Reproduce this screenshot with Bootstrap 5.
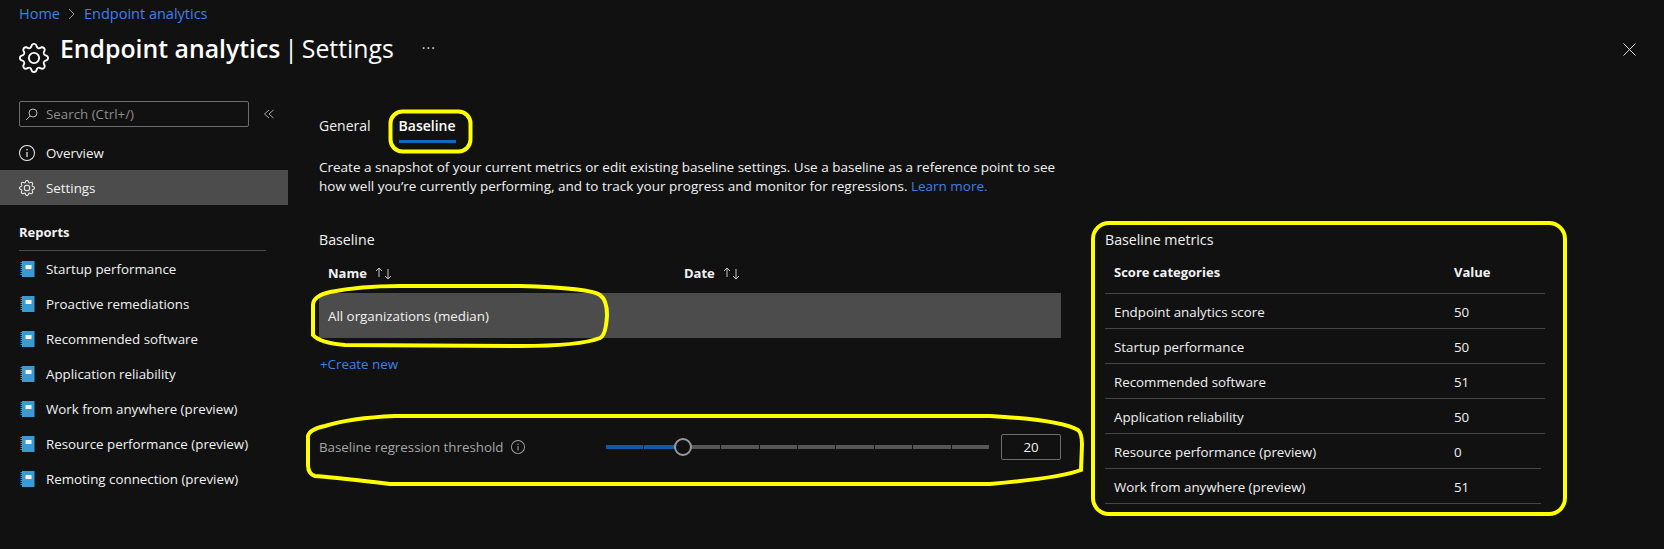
<!DOCTYPE html>
<html lang="en">
<head>
    <meta charset="UTF-8">
    <title>Endpoint analytics | Settings</title>
    <link href="https://cdn.jsdelivr.net/npm/bootstrap@5.3.3/dist/css/bootstrap.min.css" rel="stylesheet">
    <script src="https://cdn.jsdelivr.net/npm/bootstrap@5.3.3/dist/js/bootstrap.bundle.min.js"></script>
    <style>
        html, body { height: 549px; overflow: hidden; }
        body { background: #111112; color: #f2f2f2; font-family: "Open Sans", "Noto Sans", sans-serif; font-size: 13.33px; line-height: 19px; position: relative; }
        a { color: #3f80ea; text-decoration: none; }
        .crumbs { height: 26px; padding: 1px 0 0 19px; font-size: 14.5px; line-height: 20px; }
        .crumb-sep { width: 7px; height: 12px; margin: 0 8.5px; fill: none; stroke: #9a9a9a; }
        .page-head { height: 67px; padding: 7px 20px 0 19px; }
        .page-gear { width: 30px; height: 30px; margin-top: 10px; margin-right: 11px; fill: #fff; }
        .page-title { font-size: 24.8px; line-height: 30px; margin: 0; font-weight: 400; color: #fff; word-spacing: -2.5px; }
        .page-title b { font-weight: 600; word-spacing: 0; }
        .more-dots { margin: 5px 0 0 28px; font-size: 14px; letter-spacing: 1px; color: #ddd; line-height: 20px; }
        .side { width: 288px; padding-top: 8px; flex: none; }
        .search-row { padding-left: 19px; height: 26px; margin-bottom: 8px; }
        .search-box { width: 230px; height: 26px; border: 1px solid #6e6e6e; border-radius: 2px; padding-left: 5px; color: #8d8d8d; gap: 8px; }
        .collapse-mark { margin-left: 14px; width: 12px; height: 12px; fill: none; stroke: #aaa; stroke-width: 1; }
        .side-link { height: 35px; padding: 2px 0 0 19px; gap: 11px; color: #f2f2f2; }
        .side-link.picked { background: #4c4c4c; }
        .side-icon { width: 16px; height: 16px; flex: none; fill: #eee; margin-top: -2px; }
        .side-head { margin: 18px 22px 0 19px; padding-bottom: 6px; height: 28px; border-bottom: 1px solid #4a4a4a; font-weight: 700; font-size: 13px; }
        .book-icon { width: 16px; height: 16px; flex: none; margin-top: -2px; }
        .main-pane { padding-left: 31px; }
        .tab-strip { gap: 28px; height: 50px; padding-top: 19px; }
        .tab-item { padding: 0; height: 31px; color: #f2f2f2; line-height: 28px; font-size: 14px; }
        .tab-item.on { font-weight: 600; color: #fff; border-bottom: 3px solid #0f6cbd; }
        .intro { margin: 15px 0 0; width: 742px; font-size: 13.5px; }
        .col-left { width: 742px; }
        .col-right { width: 440px; margin-left: 44px; }
        .block-title { margin-top: 34px; height: 25px; font-size: 14.2px; }
        .grid-table { --bs-table-bg: transparent; --bs-table-color: #f2f2f2; --bs-table-border-color: #454545; margin: 0; table-layout: fixed; }
        .grid-table th, .grid-table td { padding: 0 9px; vertical-align: middle; }
        .grid-table td { height: 35px; padding-top: 4px; }
        .grid-table th { font-weight: 700; height: 38px; font-size: 13px; padding-bottom: 2px; }
        .sort-arrows { width: 18px; height: 14px; margin-left: 5px; fill: none; stroke: #c8c8c8; stroke-width: 1; vertical-align: -2px; }
        .base-table th:first-child { width: 356px; }
        .base-table th { border-bottom: 0; }
        .base-table td { height: 45px; background: #4c4c4c; border-bottom: 0; padding-top: 2px; }
        .add-link { display: block; margin: 17px 0 0 1px; }
        .thresh-row { margin-top: 60px; height: 26px; }
        .thresh-label { width: 287px; color: #a6a6a6; gap: 8px; }
        .info-icon { width: 14px; height: 14px; fill: #a6a6a6; }
        .track { width: 383px; height: 4px; gap: 1px; position: relative; margin-right: 12px; }
        .track span { flex: 1; background: #565656; }
        .track span.done { background: #0b5cad; }
        .thumb { position: absolute; left: 68px; top: -7px; width: 18px; height: 18px; border-radius: 50%; border: 2px solid #9a9a9a; background: #111112; }
        .value-box { width: 60px; height: 26px; border: 1px solid #6e6e6e; border-radius: 2px; }
        .metrics-table th:first-child { width: 340px; }
        /* the last two rules stop 4px short of the table edge */
        .metrics-table tbody tr:nth-child(n+5) td:last-child { position: relative; }
        .metrics-table tbody tr:nth-child(n+5) td:last-child::after { content: ""; position: absolute; right: 0; bottom: -1px; width: 4px; height: 2px; background: #111112; }
        .close-mark { width: 13px; height: 13px; stroke: #ddd; stroke-width: 1; position: absolute; left: 1623px; top: 43px; }
        .marks { position: absolute; left: 0; top: 0; width: 1664px; height: 549px; pointer-events: none; fill: none; stroke: #ffff00; stroke-width: 4; }
    </style>
</head>
<body>
    <svg width="0" height="0" class="position-absolute">
        <symbol id="gear" viewBox="0 0 16 16">
            <path d="M8 4.754a3.246 3.246 0 1 0 0 6.492 3.246 3.246 0 0 0 0-6.492zM5.754 8a2.246 2.246 0 1 1 4.492 0 2.246 2.246 0 0 1-4.492 0z"/>
            <path d="M9.796 1.343c-.527-1.79-3.065-1.79-3.592 0l-.094.319a.873.873 0 0 1-1.255.52l-.292-.16c-1.64-.892-3.433.902-2.54 2.541l.159.292a.873.873 0 0 1-.52 1.255l-.319.094c-1.79.527-1.79 3.065 0 3.592l.319.094a.873.873 0 0 1 .52 1.255l-.16.292c-.892 1.64.901 3.434 2.541 2.54l.292-.159a.873.873 0 0 1 1.255.52l.094.319c.527 1.79 3.065 1.79 3.592 0l.094-.319a.873.873 0 0 1 1.255-.52l.292.16c1.64.893 3.434-.902 2.54-2.541l-.159-.292a.873.873 0 0 1 .52-1.255l.319-.094c1.79-.527 1.79-3.065 0-3.592l-.319-.094a.873.873 0 0 1-.52-1.255l.16-.292c.893-1.64-.902-3.433-2.541-2.54l-.292.159a.873.873 0 0 1-1.255-.52l-.094-.319zm-2.633.283c.246-.835 1.428-.835 1.674 0l.094.319a1.873 1.873 0 0 0 2.693 1.115l.291-.16c.764-.415 1.6.42 1.184 1.185l-.159.292a1.873 1.873 0 0 0 1.116 2.692l.318.094c.835.246.835 1.428 0 1.674l-.319.094a1.873 1.873 0 0 0-1.115 2.693l.16.291c.415.764-.42 1.6-1.185 1.184l-.291-.159a1.873 1.873 0 0 0-2.693 1.116l-.094.318c-.246.835-1.428.835-1.674 0l-.094-.319a1.873 1.873 0 0 0-2.692-1.115l-.292.16c-.764.415-1.6-.42-1.184-1.185l.159-.291A1.873 1.873 0 0 0 1.945 8.93l-.319-.094c-.835-.246-.835-1.428 0-1.674l.319-.094A1.873 1.873 0 0 0 3.06 4.377l-.16-.292c-.415-.764.42-1.6 1.185-1.184l.292.159a1.873 1.873 0 0 0 2.692-1.115l.094-.319z"/>
        </symbol>
        <symbol id="info" viewBox="0 0 16 16">
            <path d="M8 15A7 7 0 1 1 8 1a7 7 0 0 1 0 14zm0 1A8 8 0 1 0 8 0a8 8 0 0 0 0 16z"/>
            <rect x="7.4" y="7" width="1.2" height="5"/>
            <circle cx="8" cy="4.8" r=".8"/>
        </symbol>
        <symbol id="book" viewBox="0 0 16 16">
            <rect x="3" y="0" width="12.5" height="16" fill="#3a9ad2"/>
            <rect x="6.5" y="4" width="6" height="4" fill="#f4f4f4"/>
            <path d="M1.5 1.5h2M1.5 3.5h2M1.5 5.5h2M1.5 7.5h2M1.5 9.5h2M1.5 11.5h2M1.5 13.5h2" stroke="#3a9ad2" stroke-width="1.1"/>
        </symbol>
        <symbol id="sort" viewBox="0 0 18 14">
            <path d="M4 11V2M1 5l3-3 3 3M13 3v10M10 10l3 3 3-3"/>
        </symbol>
    </svg>

    <div class="crumbs d-flex align-items-center"><a href="#">Home</a><svg class="crumb-sep" viewBox="0 0 7 12"><path d="M1 1l5 5-5 5"/></svg><a href="#">Endpoint analytics</a></div>

    <div class="page-head d-flex align-items-start">
        <svg class="page-gear"><use href="#gear"/></svg>
        <h1 class="page-title"><b>Endpoint analytics</b> | Settings</h1>
        <span class="more-dots">&middot;&middot;&middot;</span>
    </div>
    <svg class="close-mark" viewBox="0 0 13 13"><path d="M.5.5l12 12M12.5.5l-12 12"/></svg>

    <div class="d-flex">
        <div class="side">
            <div class="search-row d-flex align-items-center">
                <div class="search-box d-flex align-items-center">
                    <svg width="13" height="13" viewBox="0 0 13 13" fill="none" stroke="#bbb"><circle cx="8" cy="5" r="4"/><path d="M5 8l-4 4"/></svg>
                    <span>Search (Ctrl+/)</span>
                </div>
                <svg class="collapse-mark" viewBox="0 0 12 12"><path d="M6 2L1.5 6 6 10M10.5 2L6 6l4.5 4"/></svg>
            </div>
            <a href="#" class="side-link d-flex align-items-center"><svg class="side-icon"><use href="#info"/></svg>Overview</a>
            <a href="#" class="side-link picked d-flex align-items-center"><svg class="side-icon"><use href="#gear"/></svg>Settings</a>
            <div class="side-head">Reports</div>
            <a href="#" class="side-link d-flex align-items-center"><svg class="book-icon"><use href="#book"/></svg>Startup performance</a>
            <a href="#" class="side-link d-flex align-items-center"><svg class="book-icon"><use href="#book"/></svg>Proactive remediations</a>
            <a href="#" class="side-link d-flex align-items-center"><svg class="book-icon"><use href="#book"/></svg>Recommended software</a>
            <a href="#" class="side-link d-flex align-items-center"><svg class="book-icon"><use href="#book"/></svg>Application reliability</a>
            <a href="#" class="side-link d-flex align-items-center"><svg class="book-icon"><use href="#book"/></svg>Work from anywhere (preview)</a>
            <a href="#" class="side-link d-flex align-items-center"><svg class="book-icon"><use href="#book"/></svg>Resource performance (preview)</a>
            <a href="#" class="side-link d-flex align-items-center"><svg class="book-icon"><use href="#book"/></svg>Remoting connection (preview)</a>
        </div>

        <div class="main-pane flex-grow-1">
            <div class="tab-strip d-flex">
                <a href="#" class="tab-item">General</a>
                <a href="#" class="tab-item on">Baseline</a>
            </div>
            <p class="intro">Create a snapshot of your current metrics or edit existing baseline settings. Use a baseline as a reference point to see how well you’re currently performing, and to track your progress and monitor for regressions. <a href="#">Learn more.</a></p>

            <div class="d-flex">
                <div class="col-left">
                    <div class="block-title">Baseline</div>
                    <table class="table grid-table base-table">
                        <thead>
                            <tr><th>Name <svg class="sort-arrows"><use href="#sort"/></svg></th><th>Date <svg class="sort-arrows"><use href="#sort"/></svg></th></tr>
                        </thead>
                        <tbody>
                            <tr><td>All organizations (median)</td><td></td></tr>
                        </tbody>
                    </table>
                    <a href="#" class="add-link">+Create new</a>
                    <div class="thresh-row d-flex align-items-center">
                        <div class="thresh-label d-flex align-items-center">Baseline regression threshold <svg class="info-icon"><use href="#info"/></svg></div>
                        <div class="track d-flex">
                            <span class="done"></span><span class="done"></span><span></span><span></span><span></span><span></span><span></span><span></span><span></span><span></span>
                            <i class="thumb"></i>
                        </div>
                        <div class="value-box d-flex align-items-center justify-content-center">20</div>
                    </div>
                </div>

                <div class="col-right">
                    <div class="block-title">Baseline metrics</div>
                    <table class="table grid-table metrics-table">
                        <thead>
                            <tr><th>Score categories</th><th>Value</th></tr>
                        </thead>
                        <tbody>
                            <tr><td>Endpoint analytics score</td><td>50</td></tr>
                            <tr><td>Startup performance</td><td>50</td></tr>
                            <tr><td>Recommended software</td><td>51</td></tr>
                            <tr><td>Application reliability</td><td>50</td></tr>
                            <tr><td>Resource performance (preview)</td><td>0</td></tr>
                            <tr><td>Work from anywhere (preview)</td><td>51</td></tr>
                        </tbody>
                    </table>
                </div>
            </div>
        </div>
    </div>

    <!-- yellow marker annotations drawn over the screenshot -->
    <svg class="marks" viewBox="0 0 1664 549">
        <rect x="390.5" y="111.5" width="80" height="40" rx="12"/>
        <path d="M313 305Q313 296 330 292Q360 286 400 286L520 286Q590 288 600 295Q607 300 607 315Q606 335 600 338Q580 346 520 346L345 345Q320 343 313 335Z"/>
        <path d="M308 438Q307 430 325 426Q350 418 395 416L990 416Q1060 420 1078 430Q1082 433 1082 445L1081 470Q1060 478 990 484L390 484Q340 478 315 476Q308 474 308 465Z"/>
        <rect x="1093" y="223" width="472" height="291" rx="16"/>
    </svg>
</body>
</html>
